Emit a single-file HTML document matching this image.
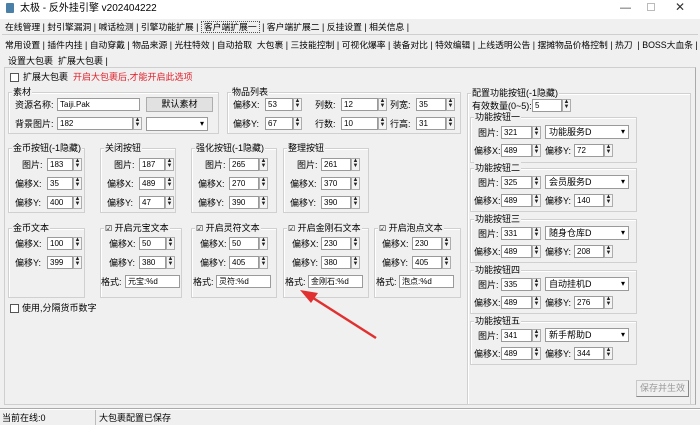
<!DOCTYPE html>
<html><head><meta charset="utf-8"><style>
*{margin:0;padding:0;box-sizing:border-box}
body{width:700px;height:425px;background:#f0f0f0;position:relative;overflow:hidden;font-family:"Liberation Sans","Noto Sans CJK SC",sans-serif;font-size:9px;color:#000}
.a{position:absolute;white-space:nowrap;line-height:12px}
.g{position:absolute;border:1px solid #d0d0d0;box-shadow:inset 1px 1px 0 #fff}
.g>b{position:absolute;top:-7px;left:3px;background:#f0f0f0;font-weight:normal;padding:0 1px;line-height:12px;white-space:nowrap}
.i{position:absolute;background:#fff;border:1px solid #9a9a9a;height:13px;font-size:8px;line-height:11px;padding-left:2px;white-space:nowrap;overflow:hidden}
.s{position:absolute;width:9px;height:13px;border:1px solid #adadad;background:#f4f4f4;font-size:6px;line-height:5px;text-align:center;color:#222}
.c{position:absolute;width:9px;height:9px;border:1px solid #555;background:#fff;font-size:8px;line-height:7px;text-align:center}
.cb{position:absolute;background:#fff;border:1px solid #9a9a9a;height:14px;font-size:9px;line-height:12px;padding-left:3px}
.cb:after{content:"▾";position:absolute;right:3px;top:0;font-size:8px}
.tb{font-size:8.8px}
</style></head><body>
<div style="position:absolute;left:0;top:0;width:700px;height:19px;background:#fff"></div>
<div class="a" style="left:6px;top:3px;width:8px;height:10px;background:#4a7fa8;border-radius:1px"></div>
<div class="a" style="left:20px;top:3px;font-size:10px">太极 - 反外挂引擎 v202404222</div>
<div class="a" style="left:620px;top:2px;font-size:11px;color:#444">—</div>
<div class="a" style="left:647px;top:3px;width:8px;height:8px;border:1px solid #bbb"></div>
<div class="a" style="left:675px;top:1px;font-size:12px;color:#333">✕</div>

<div class="a tb" style="left:5px;top:21px">在线管理 | 封引擎漏洞 | 喊话检测 | 引擎功能扩展 | <span style="border:1px dotted #555;padding:0 2px">客户端扩展一</span> | 客户端扩展二 | 反挂设置 | 相关信息 |</div>
<div style="position:absolute;left:2px;top:34px;width:696px;height:1px;background:#cfcfcf"></div>
<div class="a tb" style="left:5px;top:39px">常用设置 | 插件内挂 | 自动穿戴 | 物品来源 | 光柱特效 | 自动拾取 &nbsp;大包裹 | 三技能控制 | 可视化爆率 | 装备对比 | 特效编辑 | 上线透明公告 | 摆摊物品价格控制 | 热刀 &nbsp;| BOSS大血条 |</div>
<div class="a" style="left:8px;top:55px">设置大包裹 &nbsp;扩展大包裹 |</div>
<div style="position:absolute;left:4px;top:67px;width:692px;height:338px;border:1px solid #cfcfcf;border-right-color:#aaa"></div>

<div class="c" style="left:10px;top:73px"></div>
<div class="a" style="left:23px;top:71px">扩展大包裹 &nbsp;<span style="color:#e0202a">开启大包裹后,才能开启此选项</span></div>

<div class="g" style="left:8px;top:92px;width:211px;height:42px"><b>素材</b></div>
<div class="a" style="left:15px;top:99px">资源名称:</div>
<div class="i" style="left:57px;top:98px;width:83px">Taiji.Pak</div>
<div class="a" style="left:146px;top:97px;width:67px;height:15px;border:1px solid #adadad;background:#e1e1e1;text-align:center;line-height:13px">默认素材</div>
<div class="a" style="left:15px;top:118px">背景图片:</div>
<div class="i" style="left:57px;top:117px;width:76px">182</div><div class="s" style="left:133px;top:117px">▲<br>▼</div>
<div class="cb" style="left:146px;top:117px;width:62px"></div>

<div class="g" style="left:227px;top:92px;width:234px;height:42px"><b>物品列表</b></div>
<div class="a" style="left:233px;top:99px">偏移X:</div><div class="i" style="left:265px;top:98px;width:28px">53</div><div class="s" style="left:293px;top:98px">▲<br>▼</div>
<div class="a" style="left:233px;top:118px">偏移Y:</div><div class="i" style="left:265px;top:117px;width:28px">67</div><div class="s" style="left:293px;top:117px">▲<br>▼</div>
<div class="a" style="left:315px;top:99px">列数:</div><div class="i" style="left:341px;top:98px;width:37px">12</div><div class="s" style="left:378px;top:98px">▲<br>▼</div>
<div class="a" style="left:315px;top:118px">行数:</div><div class="i" style="left:341px;top:117px;width:37px">10</div><div class="s" style="left:378px;top:117px">▲<br>▼</div>
<div class="a" style="left:390px;top:99px">列宽:</div><div class="i" style="left:416px;top:98px;width:30px">35</div><div class="s" style="left:446px;top:98px">▲<br>▼</div>
<div class="a" style="left:390px;top:118px">行高:</div><div class="i" style="left:416px;top:117px;width:30px">31</div><div class="s" style="left:446px;top:117px">▲<br>▼</div>

<div class="g" style="left:8px;top:148px;width:77px;height:65px"><b>金币按钮(-1隐藏)</b></div>
<div class="a" style="left:22px;top:159px">图片:</div><div class="i" style="left:47px;top:158px;width:26px">183</div><div class="s" style="left:73px;top:158px">▲<br>▼</div>
<div class="a" style="left:15px;top:178px">偏移X:</div><div class="i" style="left:47px;top:177px;width:26px">35</div><div class="s" style="left:73px;top:177px">▲<br>▼</div>
<div class="a" style="left:15px;top:197px">偏移Y:</div><div class="i" style="left:47px;top:196px;width:26px">400</div><div class="s" style="left:73px;top:196px">▲<br>▼</div>

<div class="g" style="left:100px;top:148px;width:76px;height:65px"><b>关闭按钮</b></div>
<div class="a" style="left:114px;top:159px">图片:</div><div class="i" style="left:139px;top:158px;width:26px">187</div><div class="s" style="left:165px;top:158px">▲<br>▼</div>
<div class="a" style="left:107px;top:178px">偏移X:</div><div class="i" style="left:139px;top:177px;width:26px">489</div><div class="s" style="left:165px;top:177px">▲<br>▼</div>
<div class="a" style="left:107px;top:197px">偏移Y:</div><div class="i" style="left:139px;top:196px;width:26px">47</div><div class="s" style="left:165px;top:196px">▲<br>▼</div>

<div class="g" style="left:191px;top:148px;width:86px;height:65px"><b>强化按钮(-1隐藏)</b></div>
<div class="a" style="left:205px;top:159px">图片:</div><div class="i" style="left:229px;top:158px;width:30px">265</div><div class="s" style="left:259px;top:158px">▲<br>▼</div>
<div class="a" style="left:198px;top:178px">偏移X:</div><div class="i" style="left:229px;top:177px;width:30px">270</div><div class="s" style="left:259px;top:177px">▲<br>▼</div>
<div class="a" style="left:198px;top:197px">偏移Y:</div><div class="i" style="left:229px;top:196px;width:30px">390</div><div class="s" style="left:259px;top:196px">▲<br>▼</div>

<div class="g" style="left:283px;top:148px;width:86px;height:65px"><b>整理按钮</b></div>
<div class="a" style="left:297px;top:159px">图片:</div><div class="i" style="left:321px;top:158px;width:30px">261</div><div class="s" style="left:351px;top:158px">▲<br>▼</div>
<div class="a" style="left:290px;top:178px">偏移X:</div><div class="i" style="left:321px;top:177px;width:30px">370</div><div class="s" style="left:351px;top:177px">▲<br>▼</div>
<div class="a" style="left:290px;top:197px">偏移Y:</div><div class="i" style="left:321px;top:196px;width:30px">390</div><div class="s" style="left:351px;top:196px">▲<br>▼</div>

<div class="g" style="left:8px;top:228px;width:77px;height:70px"><b>金币文本</b></div>
<div class="a" style="left:15px;top:238px">偏移X:</div><div class="i" style="left:47px;top:237px;width:26px">100</div><div class="s" style="left:73px;top:237px">▲<br>▼</div>
<div class="a" style="left:15px;top:257px">偏移Y:</div><div class="i" style="left:47px;top:256px;width:26px">399</div><div class="s" style="left:73px;top:256px">▲<br>▼</div>

<div class="g" style="left:100px;top:228px;width:82px;height:70px"><b><span style="font-size:8px">☑</span> 开启元宝文本</b></div>
<div class="a" style="left:109px;top:238px">偏移X:</div><div class="i" style="left:139px;top:237px;width:27px">50</div><div class="s" style="left:166px;top:237px">▲<br>▼</div>
<div class="a" style="left:109px;top:257px">偏移Y:</div><div class="i" style="left:139px;top:256px;width:27px">380</div><div class="s" style="left:166px;top:256px">▲<br>▼</div>
<div class="a" style="left:101px;top:276px">格式:</div><div class="i" style="left:125px;top:275px;width:55px">元宝:%d</div>

<div class="g" style="left:191px;top:228px;width:86px;height:70px"><b><span style="font-size:8px">☑</span> 开启灵符文本</b></div>
<div class="a" style="left:200px;top:238px">偏移X:</div><div class="i" style="left:229px;top:237px;width:30px">50</div><div class="s" style="left:259px;top:237px">▲<br>▼</div>
<div class="a" style="left:200px;top:257px">偏移Y:</div><div class="i" style="left:229px;top:256px;width:30px">405</div><div class="s" style="left:259px;top:256px">▲<br>▼</div>
<div class="a" style="left:193px;top:276px">格式:</div><div class="i" style="left:216px;top:275px;width:55px">灵符:%d</div>

<div class="g" style="left:283px;top:228px;width:86px;height:70px"><b><span style="font-size:8px">☑</span> 开启金刚石文本</b></div>
<div class="a" style="left:292px;top:238px">偏移X:</div><div class="i" style="left:321px;top:237px;width:30px">230</div><div class="s" style="left:351px;top:237px">▲<br>▼</div>
<div class="a" style="left:292px;top:257px">偏移Y:</div><div class="i" style="left:321px;top:256px;width:30px">380</div><div class="s" style="left:351px;top:256px">▲<br>▼</div>
<div class="a" style="left:285px;top:276px">格式:</div><div class="i" style="left:308px;top:275px;width:55px">金刚石:%d</div>

<div class="g" style="left:374px;top:228px;width:87px;height:70px"><b><span style="font-size:8px">☑</span> 开启泡点文本</b></div>
<div class="a" style="left:382px;top:238px">偏移X:</div><div class="i" style="left:412px;top:237px;width:30px">230</div><div class="s" style="left:442px;top:237px">▲<br>▼</div>
<div class="a" style="left:382px;top:257px">偏移Y:</div><div class="i" style="left:412px;top:256px;width:30px">405</div><div class="s" style="left:442px;top:256px">▲<br>▼</div>
<div class="a" style="left:376px;top:276px">格式:</div><div class="i" style="left:399px;top:275px;width:55px">泡点:%d</div>

<div class="c" style="left:10px;top:304px"></div>
<div class="a" style="left:22px;top:302px">使用,分隔货币数字</div>

<svg style="position:absolute;left:0;top:0" width="700" height="425"><line x1="376" y1="338" x2="310" y2="296" stroke="#e03030" stroke-width="2.5"/><polygon points="300,290 318,293 311,303" fill="#e03030"/></svg>

<div class="g" style="left:467px;top:93px;width:224px;height:312px"><b>配置功能按钮(-1隐藏)</b></div>
<div class="a" style="left:472px;top:100px">有效数量(0~5):</div><div class="i" style="left:532px;top:99px;width:30px">5</div><div class="s" style="left:562px;top:99px">▲<br>▼</div>

<div class="g" style="left:470px;top:117px;width:167px;height:46px"><b>功能按钮一</b></div>
<div class="a" style="left:478px;top:127px">图片:</div><div class="i" style="left:501px;top:126px;width:31px">321</div><div class="s" style="left:532px;top:126px">▲<br>▼</div><div class="cb" style="left:545px;top:125px;width:84px">功能服务D</div>
<div class="a" style="left:474px;top:145px">偏移X:</div><div class="i" style="left:501px;top:144px;width:31px">489</div><div class="s" style="left:532px;top:144px">▲<br>▼</div>
<div class="a" style="left:545px;top:145px">偏移Y:</div><div class="i" style="left:574px;top:144px;width:30px">72</div><div class="s" style="left:604px;top:144px">▲<br>▼</div>

<div class="g" style="left:470px;top:168px;width:167px;height:44px"><b>功能按钮二</b></div>
<div class="a" style="left:478px;top:177px">图片:</div><div class="i" style="left:501px;top:176px;width:31px">325</div><div class="s" style="left:532px;top:176px">▲<br>▼</div><div class="cb" style="left:545px;top:175px;width:84px">会员服务D</div>
<div class="a" style="left:474px;top:195px">偏移X:</div><div class="i" style="left:501px;top:194px;width:31px">489</div><div class="s" style="left:532px;top:194px">▲<br>▼</div>
<div class="a" style="left:545px;top:195px">偏移Y:</div><div class="i" style="left:574px;top:194px;width:30px">140</div><div class="s" style="left:604px;top:194px">▲<br>▼</div>

<div class="g" style="left:470px;top:219px;width:167px;height:44px"><b>功能按钮三</b></div>
<div class="a" style="left:478px;top:228px">图片:</div><div class="i" style="left:501px;top:227px;width:31px">331</div><div class="s" style="left:532px;top:227px">▲<br>▼</div><div class="cb" style="left:545px;top:226px;width:84px">随身仓库D</div>
<div class="a" style="left:474px;top:246px">偏移X:</div><div class="i" style="left:501px;top:245px;width:31px">489</div><div class="s" style="left:532px;top:245px">▲<br>▼</div>
<div class="a" style="left:545px;top:246px">偏移Y:</div><div class="i" style="left:574px;top:245px;width:30px">208</div><div class="s" style="left:604px;top:245px">▲<br>▼</div>

<div class="g" style="left:470px;top:270px;width:167px;height:44px"><b>功能按钮四</b></div>
<div class="a" style="left:478px;top:279px">图片:</div><div class="i" style="left:501px;top:278px;width:31px">335</div><div class="s" style="left:532px;top:278px">▲<br>▼</div><div class="cb" style="left:545px;top:277px;width:84px">自动挂机D</div>
<div class="a" style="left:474px;top:297px">偏移X:</div><div class="i" style="left:501px;top:296px;width:31px">489</div><div class="s" style="left:532px;top:296px">▲<br>▼</div>
<div class="a" style="left:545px;top:297px">偏移Y:</div><div class="i" style="left:574px;top:296px;width:30px">276</div><div class="s" style="left:604px;top:296px">▲<br>▼</div>

<div class="g" style="left:470px;top:321px;width:167px;height:44px"><b>功能按钮五</b></div>
<div class="a" style="left:478px;top:330px">图片:</div><div class="i" style="left:501px;top:329px;width:31px">341</div><div class="s" style="left:532px;top:329px">▲<br>▼</div><div class="cb" style="left:545px;top:328px;width:84px">新手帮助D</div>
<div class="a" style="left:474px;top:348px">偏移X:</div><div class="i" style="left:501px;top:347px;width:31px">489</div><div class="s" style="left:532px;top:347px">▲<br>▼</div>
<div class="a" style="left:545px;top:348px">偏移Y:</div><div class="i" style="left:574px;top:347px;width:30px">344</div><div class="s" style="left:604px;top:347px">▲<br>▼</div>

<div class="a" style="left:636px;top:380px;width:53px;height:17px;border:1px solid #c8c8c8;border-right-color:#888;border-bottom-color:#888;text-align:center;line-height:15px;color:#999">保存并生效</div>

<div style="position:absolute;left:0;top:408px;width:700px;height:2px;border-top:1px solid #aaa;border-bottom:1px solid #fff"></div>
<div style="position:absolute;left:95px;top:410px;width:1px;height:15px;background:#bbb"></div>
<div class="a" style="left:2px;top:412px">当前在线:0</div>
<div class="a" style="left:99px;top:412px">大包裹配置已保存</div>
</body></html>
